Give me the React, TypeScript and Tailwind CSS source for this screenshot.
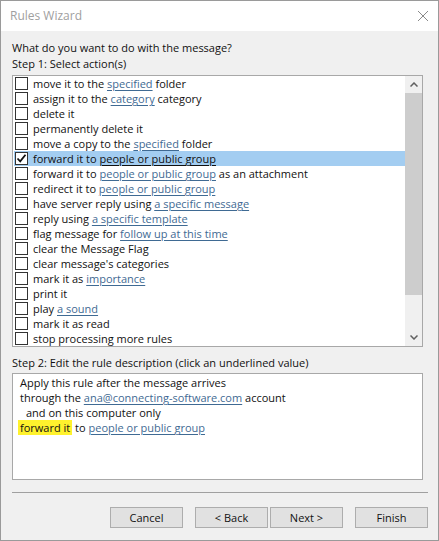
import React from 'react';

type Part = { t: string; link?: boolean };

const actions: Part[][] = [
  [{ t: 'move it to the ' }, { t: 'specified', link: true }, { t: ' folder' }],
  [{ t: 'assign it to the ' }, { t: 'category', link: true }, { t: ' category' }],
  [{ t: 'delete it' }],
  [{ t: 'permanently delete it' }],
  [{ t: 'move a copy to the ' }, { t: 'specified', link: true }, { t: ' folder' }],
  [{ t: 'forward it to ' }, { t: 'people or public group', link: true }],
  [{ t: 'forward it to ' }, { t: 'people or public group', link: true }, { t: ' as an attachment' }],
  [{ t: 'redirect it to ' }, { t: 'people or public group', link: true }],
  [{ t: 'have server reply using ' }, { t: 'a specific message', link: true }],
  [{ t: 'reply using ' }, { t: 'a specific template', link: true }],
  [{ t: 'flag message for ' }, { t: 'follow up at this time', link: true }],
  [{ t: 'clear the Message Flag' }],
  [{ t: "clear message's categories" }],
  [{ t: 'mark it as ' }, { t: 'importance', link: true }],
  [{ t: 'print it' }],
  [{ t: 'play ' }, { t: 'a sound', link: true }],
  [{ t: 'mark it as read' }],
  [{ t: 'stop processing more rules' }],
];

const SELECTED = 5;

const Checkbox = ({ checked }: { checked: boolean }) => (
  <div className="w-[13px] h-[13px] border border-[#333333] bg-white shrink-0 flex items-center justify-center">
    {checked && (
      <svg width="11" height="11" viewBox="0 0 11 11">
        <path d="M1.5 5.5 L4.2 8.3 L9.5 1.8" fill="none" stroke="#111" strokeWidth="1.8" />
      </svg>
    )}
  </div>
);

const WinButton = ({ label }: { label: string }) => (
  <button className="w-[73px] h-[21px] bg-[#e1e1e1] border border-[#adadad] text-[11px] text-[#111] leading-none">
    {label}
  </button>
);

export default function App() {
  return (
    <div
      className="w-[439px] h-[541px] flex flex-col bg-[#f0f0f0] border border-[#9a9a9a] text-[11px] text-[#111]"
      style={{ fontFamily: '"Open Sans", "Noto Sans", sans-serif' }}
    >
      <div className="h-[30px] bg-white flex items-center justify-between pl-[9px] pr-[9px] shrink-0">
        <span className="text-[12px] text-[#a0a0a0]">Rules Wizard</span>
        <svg width="12" height="12" viewBox="0 0 12 12">
          <path d="M1 1 L11 11 M11 1 L1 11" stroke="#8a8a8a" strokeWidth="1" />
        </svg>
      </div>

      <div className="flex flex-col pl-[11px] pr-[10px] pt-[9px]">
        <div className="h-[16px] leading-[16px]">What do you want to do with the message?</div>
        <div className="h-[16px] leading-[16px]">Step 1: Select action(s)</div>

        <div className="mt-[3px] h-[272px] w-[411px] border border-[#a8a8a8] bg-white flex">
          <div className="flex-1 pl-[1px] overflow-hidden">
            {actions.map((parts, i) => (
              <div
                key={i}
                className={`h-[15px] flex items-center gap-[5px] pl-[1px] ${i === SELECTED ? 'bg-[#a3cdf1]' : ''}`}
              >
                <Checkbox checked={i === SELECTED} />
                <span className="whitespace-pre leading-[15px]">
                  {parts.map((p, j) =>
                    p.link ? (
                      <span
                        key={j}
                        className={`underline underline-offset-2 ${i === SELECTED ? 'text-[#111]' : 'text-[#3f6a93]'}`}
                      >
                        {p.t}
                      </span>
                    ) : (
                      <span key={j}>{p.t}</span>
                    )
                  )}
                </span>
              </div>
            ))}
          </div>
          <div className="w-[17px] bg-[#f0f0f0] flex flex-col">
            <div className="h-[17px] flex items-center justify-center">
              <svg width="8" height="5" viewBox="0 0 8 5">
                <path d="M0.5 4.5 L4 1 L7.5 4.5" fill="none" stroke="#606060" strokeWidth="1.5" />
              </svg>
            </div>
            <div className="h-[202px] bg-[#cdcdcd]" />
            <div className="flex-1" />
            <div className="h-[17px] flex items-center justify-center">
              <svg width="8" height="5" viewBox="0 0 8 5">
                <path d="M0.5 0.5 L4 4 L7.5 0.5" fill="none" stroke="#606060" strokeWidth="1.5" />
              </svg>
            </div>
          </div>
        </div>

        <div className="mt-[8px] h-[16px] leading-[16px]">Step 2: Edit the rule description (click an underlined value)</div>

        <div className="mt-[2px] h-[107px] w-[411px] border border-[#a8a8a8] bg-white pl-[7px] pt-[1px]">
          <div className="h-[15px] leading-[15px]">Apply this rule after the message arrives</div>
          <div className="h-[15px] leading-[15px]">
            through the{' '}
            <span className="underline underline-offset-2 text-[#3f6a93]">ana@connecting-software.com</span> account
          </div>
          <div className="h-[15px] leading-[15px] pl-[6px]">and on this computer only</div>
          <div className="h-[15px] leading-[15px] -ml-[2px]">
            <span className="bg-[#fff22d] px-[2px]">forward it</span> to{' '}
            <span className="underline underline-offset-2 text-[#3f6a93]">people or public group</span>
          </div>
        </div>

        <div className="mt-[12px] h-px w-[416px] bg-[#a0a0a0]" />

        <div className="mt-[14px] flex w-[416px] justify-end">
          <WinButton label="Cancel" />
          <div className="w-[12px]" />
          <WinButton label="< Back" />
          <div className="w-[2px]" />
          <WinButton label="Next >" />
          <div className="w-[12px]" />
          <WinButton label="Finish" />
        </div>
      </div>
    </div>
  );
}
